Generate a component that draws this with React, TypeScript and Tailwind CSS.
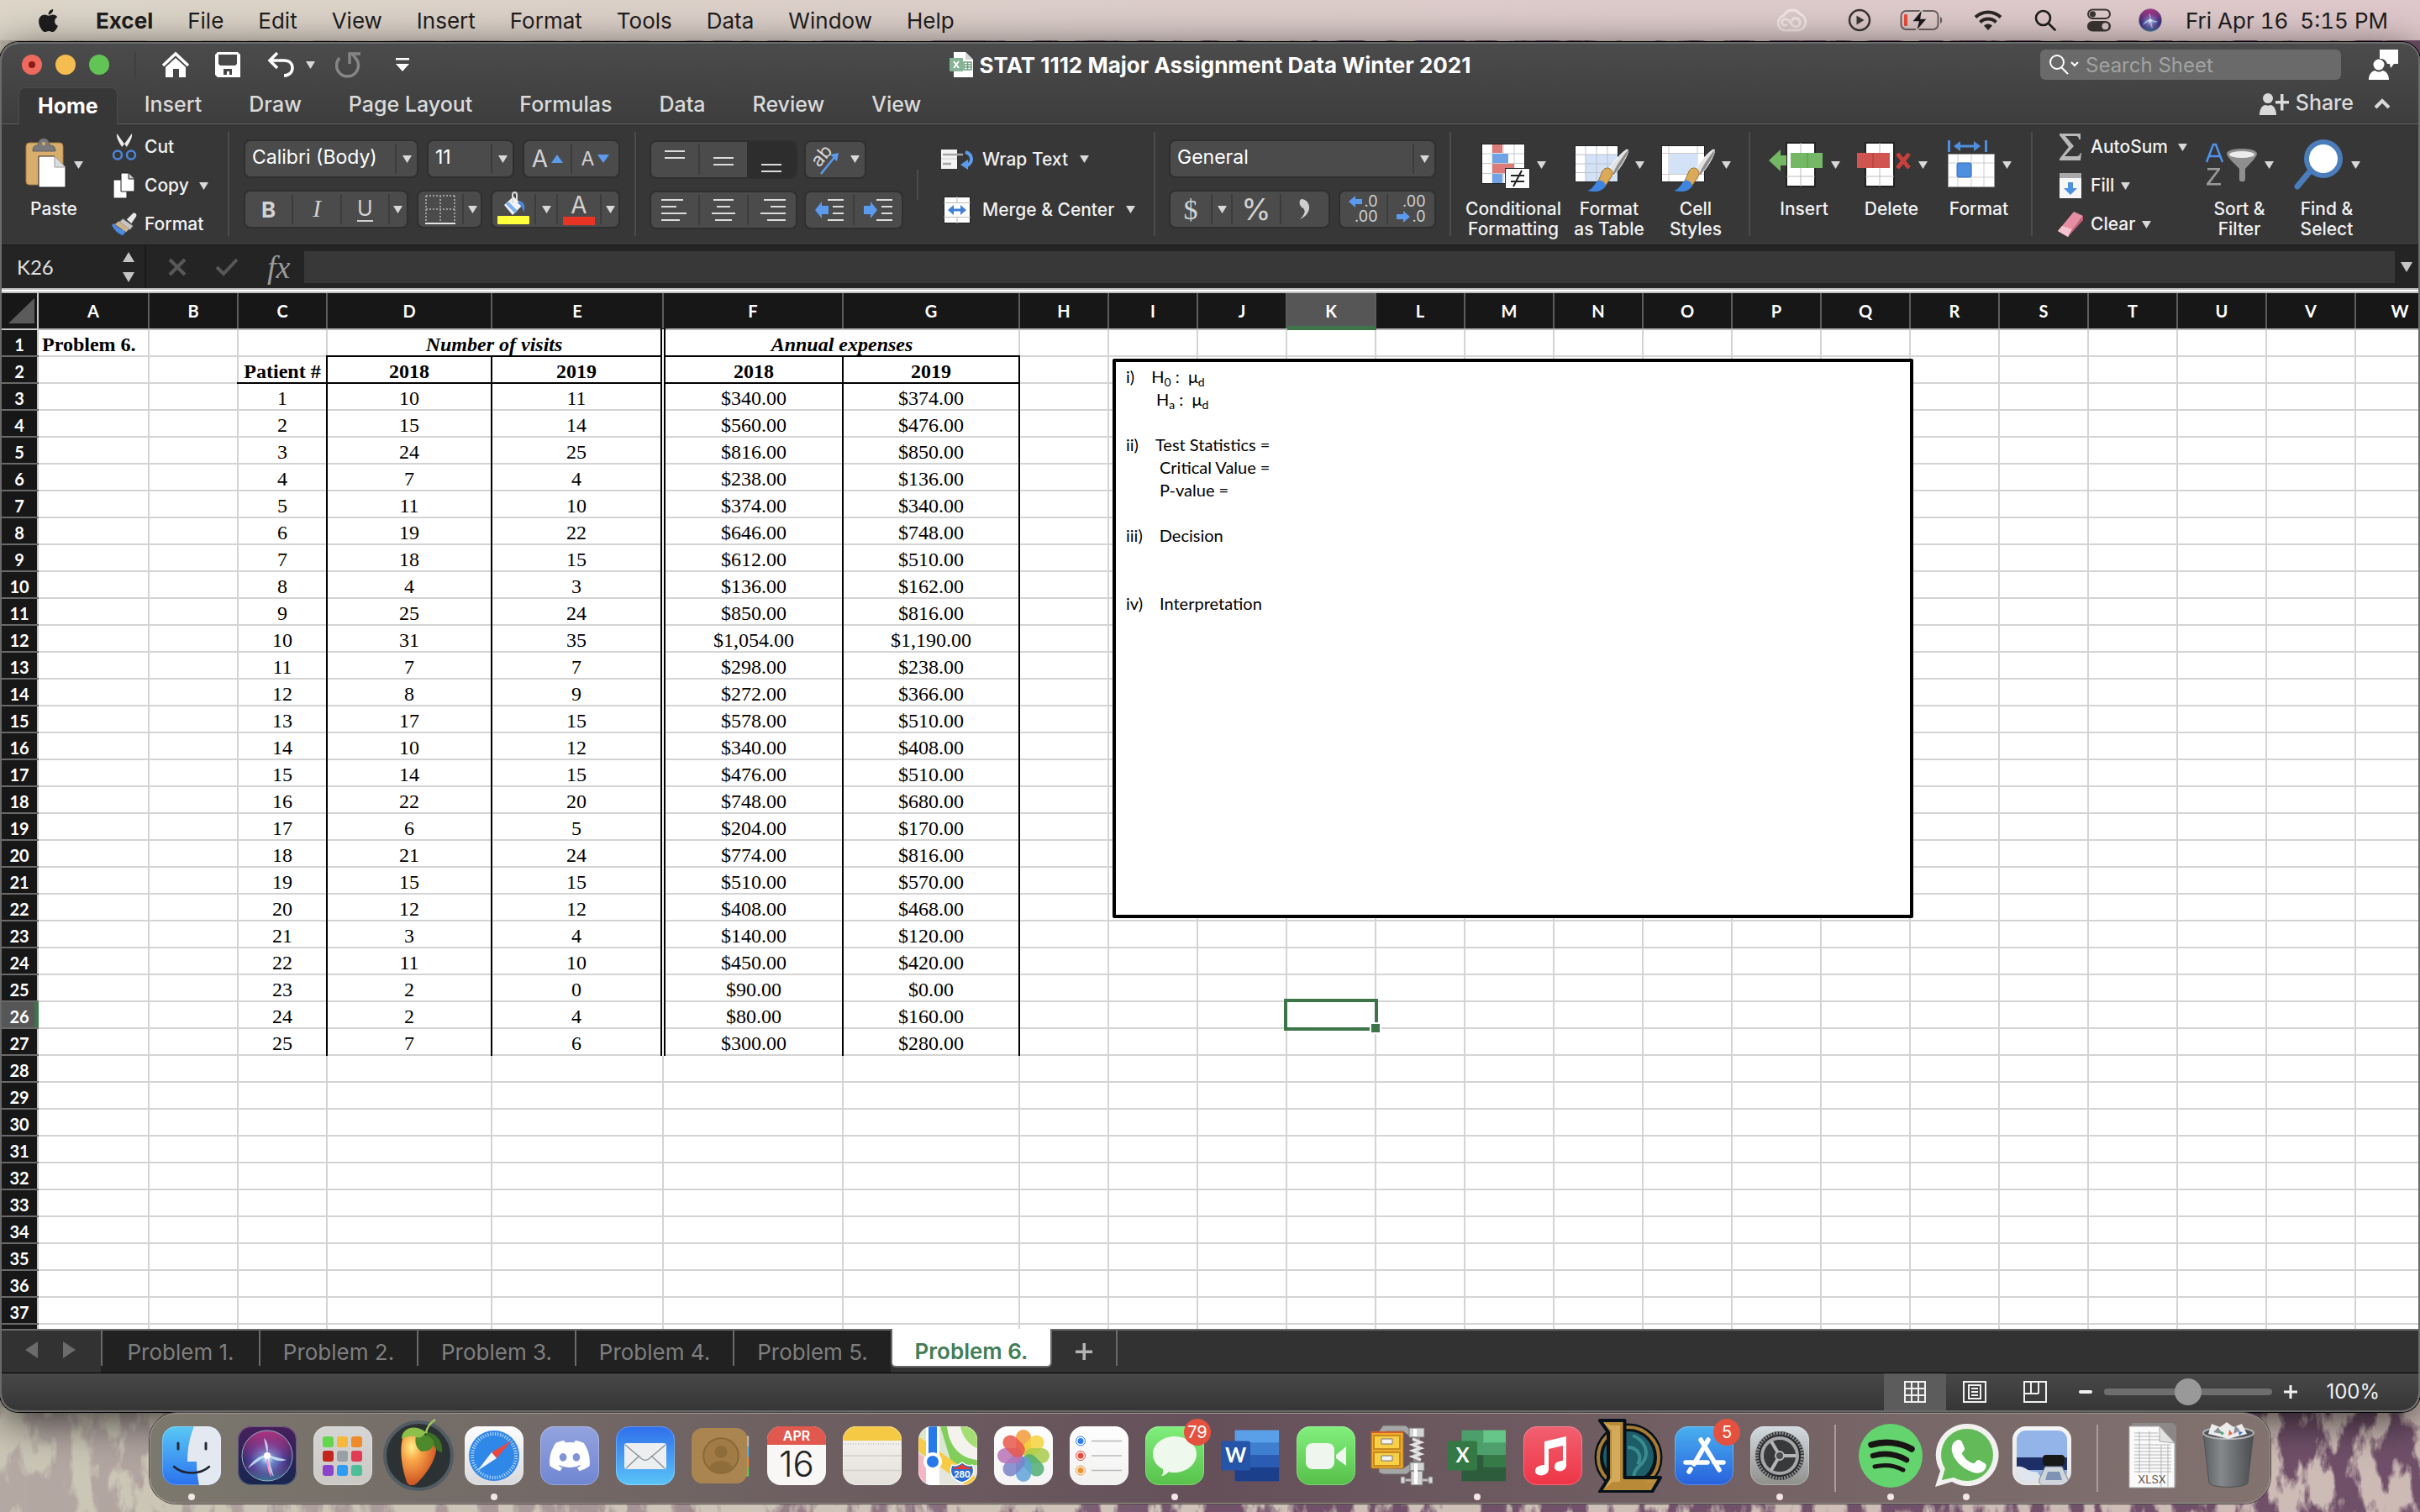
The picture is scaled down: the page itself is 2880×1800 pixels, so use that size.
import type { ReactNode } from "react";
import { FaApple, FaDiscord, FaWhatsapp } from "react-icons/fa";

const COLS = "ABCDEFGHIJKLMNOPQRSTUVW".split("");

const ROWS: [number, number, string, string][] = [
  [10, 11, "340", "374"],
  [15, 14, "560", "476"],
  [24, 25, "816", "850"],
  [7, 4, "238", "136"],
  [11, 10, "374", "340"],
  [19, 22, "646", "748"],
  [18, 15, "612", "510"],
  [4, 3, "136", "162"],
  [25, 24, "850", "816"],
  [31, 35, "1,054", "1,190"],
  [7, 7, "298", "238"],
  [8, 9, "272", "366"],
  [17, 15, "578", "510"],
  [10, 12, "340", "408"],
  [14, 15, "476", "510"],
  [22, 20, "748", "680"],
  [6, 5, "204", "170"],
  [21, 24, "774", "816"],
  [15, 15, "510", "570"],
  [12, 12, "408", "468"],
  [3, 4, "140", "120"],
  [11, 10, "450", "420"],
  [2, 0, "90", "0"],
  [2, 4, "80", "160"],
  [7, 6, "300", "280"],
];

/* ---------- menu bar ---------- */

function MenuBar() {
  return (
    <header className="relative flex h-12 shrink-0 items-center justify-between bg-linear-to-r from-[#dcd5c8] via-[#dccdca] to-[#dfc8cb] pr-[38px] pl-[42px] text-[26px] text-[#1f1d1d]">
      <nav className="flex items-center gap-[41px]">
        <button aria-label="Apple menu">
          <FaApple size={31} />
        </button>
        <button className="font-bold">Excel</button>
        {["File", "Edit", "View", "Insert", "Format", "Tools", "Data", "Window", "Help"].map((m) => (
          <button key={m}>{m}</button>
        ))}
      </nav>
      <div className="flex items-center">
        <svg width="38" height="30" viewBox="0 0 38 30" className="mr-12" fill="none" stroke="#f1e6e5" strokeWidth="3">
          <path d="M10 27h16a10 10 0 0 0 3-19.500A11 11 0 0 0 10 9.500 9 9 0 0 0 10 27Z" />
          <path d="M14 20c-3 3-8 0-6-4s7-2 9 1l3 4c4 4 10 1 9-4s-8-6-10-1" />
        </svg>
        <svg width="28" height="28" viewBox="0 0 28 28" className="mr-[34px]">
          <circle cx="14" cy="14" r="12" fill="none" stroke="#3b3534" strokeWidth="2.500" />
          <path d="M10.500 8.500v11l9-5.500Z" fill="#3b3534" />
        </svg>
        <svg width="52" height="30" viewBox="0 0 52 30" className="mr-9">
          <rect x="1.500" y="4" width="44" height="22" rx="6" fill="none" stroke="#6b6261" strokeWidth="2" />
          <rect x="5" y="8" width="4" height="14" rx="1" fill="#ee4b3b" />
          <path d="M48 11v8c3-1 3-7 0-8Z" fill="#6b6261" />
          <path d="M27 1 14 17h8l-3 12 14-16h-8Z" fill="#1b1919" stroke="#dcc9ca" strokeWidth="1.500" />
        </svg>
        <svg width="34" height="26" viewBox="0 0 34 26" className="mr-[38px]" fill="none" stroke="#2b2626" strokeWidth="4">
          <path d="M2 9.500a21.500 21.500 0 0 1 30 0" />
          <path d="M7.500 15.500a13.500 13.500 0 0 1 19 0" />
          <path d="m17 25-5-5.500a7.500 7.500 0 0 1 10 0Z" fill="#2b2626" stroke="none" />
        </svg>
        <svg width="26" height="26" viewBox="0 0 26 26" className="mr-9" fill="none" stroke="#1f1d1d" strokeWidth="2.600">
          <circle cx="10.500" cy="10.500" r="8.500" />
          <path d="m17 17 7.500 7.500" strokeLinecap="round" />
        </svg>
        <svg width="30" height="28" viewBox="0 0 30 28" className="mr-8">
          <rect x="2" y="1.500" width="26" height="10.500" rx="5.250" fill="none" stroke="#3b3534" strokeWidth="2" />
          <circle cx="7.500" cy="6.800" r="3.600" fill="#3b3534" />
          <rect x="1" y="15" width="28" height="12.500" rx="6.250" fill="#3b3534" />
          <circle cx="22.500" cy="21.200" r="4" fill="#dcc9ca" />
        </svg>
        <svg width="28" height="28" viewBox="0 0 70 70" className="mr-7">
          <SiriOrb r={34} />
        </svg>
        <span className="whitespace-pre tabular-nums">Fri Apr 16  5:15 PM</span>
      </div>
    </header>
  );
}

/* ---------- small shared parts ---------- */

function Caret({ className = "" }: { className?: string }) {
  return (
    <svg width="11" height="9" viewBox="0 0 11 9" className={`shrink-0 ${className}`}>
      <path d="M0 0h11L5.500 9Z" fill="#d9d9d9" />
    </svg>
  );
}

function Rule() {
  return <span className="mt-[9px] h-[124px] w-[2px] shrink-0 bg-[#4b4b4b]" />;
}

function Sep() {
  return <span className="h-9 w-[2px] shrink-0 bg-[#3c3c3c]" />;
}

function Box({ children, className = "" }: { children: ReactNode; className?: string }) {
  return (
    <div className={`flex h-[46px] items-center overflow-hidden rounded-lg border-2 border-[#2f2f2f] bg-[#4b4b4b] ${className}`}>
      {children}
    </div>
  );
}

function Seg({ label, children, className = "flex-1" }: { label: string; children: ReactNode; className?: string }) {
  return (
    <button aria-label={label} className={`flex h-full items-center justify-center text-[#d2d2d2] ${className}`}>
      {children}
    </button>
  );
}

function Picker({ label, value, className = "" }: { label: string; value: string; className?: string }) {
  return (
    <Box className={className}>
      <select aria-label={label} className="h-full min-w-0 flex-1 appearance-none bg-transparent pb-1 pl-2 text-[23px] text-white">
        <option>{value}</option>
      </select>
      <Sep />
      <span className="flex w-6 justify-center">
        <Caret />
      </span>
    </Box>
  );
}

function BigButton({ lines, icon, className = "" }: { lines: string[]; icon: ReactNode; className?: string }) {
  return (
    <button className={`flex shrink-0 flex-col items-center pt-4 text-[21px] leading-6 font-medium text-[#f2f2f2] ${className}`}>
      <span className="flex h-[73px] items-start gap-2">
        {icon}
        <Caret className="mt-7" />
      </span>
      {lines.map((l) => (
        <span key={l}>{l}</span>
      ))}
    </button>
  );
}

function SmallButton({ text, icon, caret, slot = "w-8 mr-2" }: { text: string; icon: ReactNode; caret?: string; slot?: string }) {
  return (
    <button className="flex h-[46px] items-center text-[21px] font-medium text-[#f2f2f2]">
      <span className={`flex justify-center ${slot}`}>{icon}</span>
      {text}
      {caret && <Caret className={caret} />}
    </button>
  );
}

function Lines({ rows, y = 0 }: { rows: [number, number][]; y?: number }) {
  return (
    <svg width="36" height="34" viewBox="0 0 36 34">
      {rows.map(([a, b], i) => (
        <rect key={i} x={a} y={y + i * 8} width={b - a} height="2" fill="#dcdcdc" />
      ))}
    </svg>
  );
}

function BlueArrow({ flip = false }: { flip?: boolean }) {
  return (
    <svg width="16" height="14" viewBox="0 0 16 14" className={flip ? "rotate-180" : ""}>
      <path d="M0 7 8 0v4h8v6H8v4Z" fill="#5b9bee" />
    </svg>
  );
}

function Brush() {
  return (
    <g>
      <path d="M62 14c-7 4-18 17-22 25l6 6c7-7 16-21 18-30Z" fill="#e3e3e3" stroke="#fff" strokeWidth="1" />
      <path d="M63 15c-5 6-14 18-18 29l2 0c6-8 15-21 17-29Z" fill="#8d8d8d" />
      <path d="M33 40c2-4 6-5 9-3s4 6 2 9l-8 12-9-4Z" fill="#dba95a" stroke="#9b7130" strokeWidth="1" />
      <path d="M27 51c5-1 9 1 10 6-4 8-14 8-22 6 6-2 8-6 12-12Z" fill="#3f85e0" />
    </g>
  );
}

/* ---------- title bar and ribbon ---------- */

function TitleBar() {
  return (
    <div className="flex h-[50px] items-center pr-6 pl-6">
      <div className="flex flex-1 items-center">
        <button aria-label="Close" className="mr-4 flex size-6 items-center justify-center rounded-full bg-[#ee6a5f]">
          <span className="size-2 rounded-full bg-[#8c1a10]" />
        </button>
        <button aria-label="Minimize" className="mr-4 size-6 rounded-full bg-[#f5bd4f]" />
        <button aria-label="Zoom" className="size-6 rounded-full bg-[#61c454]" />
        <span className="mx-[30px] h-[30px] w-[2px] bg-[#3f3f3f]" />
        <button aria-label="Home screen">
          <svg width="34" height="32" viewBox="0 0 34 32">
            <path d="M2 17 17 3l15 14" fill="none" stroke="#fff" strokeWidth="3.500" />
            <path d="M5 19 17 8l12 11v12h-8V21h-7v10H5Z" fill="#fff" />
          </svg>
        </button>
        <button aria-label="Save" className="ml-[30px]">
          <svg width="30" height="30" viewBox="0 0 30 30">
            <path fillRule="evenodd" fill="#fff" d="M3 0h24l3 3v27H3l-3-3V3Zm1 3v11l2 2h18l2-2V3Zm6 17v7h4v-4h3v4h3v-7Z" />
          </svg>
        </button>
        <button aria-label="Undo" className="ml-8">
          <svg width="34" height="32" viewBox="0 0 34 32" fill="none" stroke="#fff" strokeWidth="3.500">
            <path d="M12 2 3 11l9 9" />
            <path d="M3 11h17c7 0 10 4 10 9s-4 9-10 9" />
          </svg>
        </button>
        <Caret className="ml-3" />
        <button aria-label="Repeat" className="ml-6">
          <svg width="32" height="32" viewBox="0 0 32 32" fill="none" stroke="#858585" strokeWidth="3.500">
            <path d="M5 8a13 13 0 1 0 19 0L20 3" />
            <path d="M17 15V3h13" />
          </svg>
        </button>
        <button aria-label="Customize toolbar" className="ml-10">
          <svg width="16" height="16" viewBox="0 0 16 16" fill="#fff">
            <path d="M0 0h16v2.500H0ZM0 7h16L8 16Z" />
          </svg>
        </button>
      </div>
      <h1 className="flex items-center gap-2 text-[26px] font-bold text-white">
        <svg width="28" height="30" viewBox="0 0 28 30">
          <path d="M5 0h14l9 9v21H5Z" fill="#fff" />
          <path d="M19 0v9h9Z" fill="#d6d6d6" />
          <path d="M17 12h9v9h-9Zm0 3h9m-9 3h9m-4.500-6v9" fill="none" stroke="#6e9e7d" strokeWidth="1.500" />
          <rect x="0" y="7" width="16" height="16" rx="1" fill="#86b394" />
          <path d="m5 11 6 8m0-8-6 8" stroke="#fff" strokeWidth="2" />
        </svg>
        STAT 1112 Major Assignment Data Winter 2021
      </h1>
      <div className="flex flex-1 items-center justify-end gap-8">
        <div className="flex h-9 w-[358px] items-center rounded-md bg-[#6a6a6a] pl-[10px]">
          <svg width="38" height="24" viewBox="0 0 38 24" fill="none" stroke="#fff" strokeWidth="2">
            <circle cx="10" cy="9" r="8" />
            <path d="m15 15 8 8M27 9l4 4 4-4" />
          </svg>
          <input
            aria-label="Search sheet"
            placeholder="Search Sheet"
            className="ml-[6px] h-full min-w-0 flex-1 bg-transparent text-[24px] text-white outline-none placeholder:text-[#a2a2a2]"
          />
        </div>
        <button aria-label="Feedback">
          <svg width="36" height="36" viewBox="0 0 36 36" fill="#fff">
            <path d="M14 0h22v17h-5l-4 5-1-5h-3a8 8 0 0 0-9-6Z" />
            <circle cx="13" cy="18" r="6.500" />
            <path d="M1 36c0-7 4-11 8-11 2 2 6 2 8 0 4 0 8 4 8 11Z" />
          </svg>
        </button>
      </div>
    </div>
  );
}

function RibbonTabs() {
  return (
    <div className="flex h-[46px] items-end border-b border-[#5f5f5f] pr-[33px] pl-5 text-[25px] font-medium text-[#dadada]">
      <button className="-mb-px h-11 rounded-t-lg border border-b-0 border-[#4c4c4c] bg-[#373737] px-[22px] font-bold text-white">Home</button>
      <nav className="flex h-11 flex-1 gap-14 pl-8">
        {["Insert", "Draw", "Page Layout", "Formulas", "Data", "Review", "View"].map((t) => (
          <button key={t}>{t}</button>
        ))}
      </nav>
      <div className="flex h-11 items-center gap-2 pb-1">
        <svg width="36" height="30" viewBox="0 0 36 30" fill="#dadada">
          <circle cx="11" cy="9" r="6" />
          <path d="M1 29c0-8 4-12 7-12 2 1 4 1 6 0 3 0 7 4 7 12ZM26 4h3.500v8H36v3.500h-6.500v8H26v-8h-6V12h6Z" />
        </svg>
        <button>Share</button>
        <button aria-label="Collapse ribbon" className="ml-4">
          <svg width="20" height="14" viewBox="0 0 20 14" fill="none" stroke="#dadada" strokeWidth="4">
            <path d="m2 12 8-8 8 8" />
          </svg>
        </button>
      </div>
    </div>
  );
}

function ClipboardGroup() {
  return (
    <div className="flex w-[269px] shrink-0">
      <BigButton
        lines={["Paste"]}
        className="w-[124px]"
        icon={
          <svg width="50" height="60" viewBox="0 0 50 60">
            <rect x="1" y="6" width="44" height="50" rx="4" fill="#d9ae6c" stroke="#a87f40" strokeWidth="1" />
            <path d="M9 16c0-6 2-7 6-7 1-6 3-8 7-8s6 2 7 8c4 0 7 1 7 7Z" fill="#7a7a7a" stroke="#606060" />
            <circle cx="22" cy="7" r="2" fill="#d9ae6c" />
            <path d="M16 22h19l13 13v24H16Z" fill="#fff" stroke="#222" />
            <path d="M35 22v13h13Z" fill="#dcdcdc" stroke="#999" />
          </svg>
        }
      />
      <div className="flex flex-col pt-1 pl-[6px]">
        <SmallButton
          text="Cut"
          icon={
            <svg width="30" height="34" viewBox="0 0 30 34">
              <path d="M6 1c-1 4 3 12 9 20l3-4C13 11 10 6 6 1ZM24 1c1 4-3 12-9 20l-3-4C17 11 20 6 24 1Z" fill="#eee" />
              <circle cx="7" cy="26.500" r="5" fill="none" stroke="#4a86dc" strokeWidth="2.500" />
              <circle cx="23" cy="26.500" r="5" fill="none" stroke="#4a86dc" strokeWidth="2.500" />
            </svg>
          }
        />
        <SmallButton
          text="Copy"
          caret="ml-3"
          icon={
            <svg width="28" height="32" viewBox="0 0 28 32" fill="#fff" stroke="#222">
              <path d="M1 9h10l6 6v16H1Z" />
              <path d="M10 1h9l7 7v15H10Z" />
              <path d="M19 1v7h7" fill="#ccc" />
            </svg>
          }
        />
        <SmallButton
          text="Format"
          icon={
            <svg width="34" height="30" viewBox="0 0 34 30">
              <path d="m20 9 8-8c3-1 5 1 4 4l-6 9Z" fill="#e8e8e8" />
              <path d="m15 8 13 9-4 5L11 12Z" fill="#c6c6c6" stroke="#777" />
              <path d="m10 11 13 10-4 4L5 15Z" fill="#cdb28c" />
              <path d="M4 14c4 5 9 8 15 10l-4 5C9 27 4 22 1 16Z" fill="#4c8be0" />
            </svg>
          }
        />
      </div>
    </div>
  );
}

function FontGroup() {
  return (
    <div className="flex w-[482px] shrink-0 flex-col gap-[14px] px-[17px] pt-[18px]">
      <div className="flex gap-[10px]">
        <Picker label="Font" value="Calibri (Body)" className="w-[208px]" />
        <Picker label="Font size" value="11" className="w-[104px]" />
        <Box className="flex-1">
          <Seg label="Increase font size">
            <span className="text-[28px]">A</span>
            <svg width="14" height="10" viewBox="0 0 14 10" className="ml-1">
              <path d="M0 10h14L7 0Z" fill="#5b9bee" />
            </svg>
          </Seg>
          <Sep />
          <Seg label="Decrease font size">
            <span className="text-[23px]">A</span>
            <svg width="14" height="10" viewBox="0 0 14 10" className="ml-1">
              <path d="M0 0h14L7 10Z" fill="#5b9bee" />
            </svg>
          </Seg>
        </Box>
      </div>
      <div className="flex gap-[10px]">
        <Box className="w-[196px]">
          <Seg label="Bold">
            <span className="text-[26px] font-bold">B</span>
          </Seg>
          <Sep />
          <Seg label="Italic">
            <span className="font-['Liberation_Serif'] text-[29px] italic">I</span>
          </Seg>
          <Sep />
          <Seg label="Underline">
            <span className="border-b-2 text-[25px] leading-7">U</span>
          </Seg>
          <Sep />
          <Seg label="Underline options" className="w-5">
            <Caret />
          </Seg>
        </Box>
        <Box className="w-[78px]">
          <Seg label="Borders">
            <svg width="36" height="36" viewBox="0 0 36 36" fill="none" stroke="#9c9c9c" strokeWidth="2" strokeDasharray="2 2">
              <path d="M1 2h34M1 18h34M1 2v32M18 2v32M35 2v32" />
              <path d="M0 35h36" stroke="#e4e4e4" strokeDasharray="0" />
            </svg>
          </Seg>
          <Sep />
          <Seg label="Border options" className="w-5">
            <Caret />
          </Seg>
        </Box>
        <Box className="flex-1">
          <Seg label="Fill color">
            <svg width="38" height="42" viewBox="0 0 38 42">
              <path d="m8 16 11-10 11 10-12 12Z" fill="#f3f3f3" />
              <path d="m13 12 11 11-3 3L10 15Z" fill="#7bb0f2" />
              <path d="M18 14V4c0-4 5-4 5 0v6" fill="none" stroke="#ddd" strokeWidth="2" />
              <path d="M26 11c6 1 8 7 5 14-1-5-3-9-7-11Z" fill="#4a86dc" />
              <rect x="0" y="29" width="38" height="10" rx="1" fill="#ffff3c" />
            </svg>
          </Seg>
          <Sep />
          <Seg label="Fill color options" className="w-6">
            <Caret />
          </Seg>
          <Sep />
          <Seg label="Font color">
            <span className="flex w-[38px] flex-col items-center border-b-10 border-[#e93323] text-[28px] leading-7">A</span>
          </Seg>
          <Sep />
          <Seg label="Font color options" className="w-5">
            <Caret />
          </Seg>
        </Box>
      </div>
    </div>
  );
}

function AlignGroup() {
  return (
    <div className="flex w-[616px] shrink-0 items-center">
      <div className="flex w-[318px] flex-col gap-[14px] pl-4">
        <div className="flex gap-2">
          <Box className="w-[176px]">
            <Seg label="Top align">
              <Lines rows={[[6, 30], [6, 30]]} y={6} />
            </Seg>
            <Sep />
            <Seg label="Middle align">
              <Lines rows={[[6, 30], [6, 30]]} y={14} />
            </Seg>
            <Seg label="Bottom align" className="w-[58px] bg-[#2d2d2d]">
              <Lines rows={[[6, 30], [6, 30]]} y={22} />
            </Seg>
          </Box>
          <Box className="w-[74px]">
            <Seg label="Orientation">
              <svg width="34" height="42" viewBox="0 0 34 42" className="overflow-visible">
                <text x="10" y="31" fontSize="22" fill="#d8d8d8" transform="rotate(-50 10 31)" fontFamily="Inter, sans-serif">
                  ab
                </text>
                <path d="m12 38 17-21" stroke="#5b9bee" strokeWidth="2.500" />
                <path d="m33 13-10 2 8 8Z" fill="#5b9bee" />
              </svg>
            </Seg>
            <span className="flex w-6 justify-center">
              <Caret />
            </span>
          </Box>
        </div>
        <div className="flex gap-2">
          <Box className="w-[176px]">
            <Seg label="Align left">
              <Lines rows={[[2, 28], [2, 20], [2, 32], [2, 24]]} y={4} />
            </Seg>
            <Sep />
            <Seg label="Center">
              <Lines rows={[[6, 30], [10, 26], [4, 32], [8, 28]]} y={4} />
            </Seg>
            <Sep />
            <Seg label="Align right">
              <Lines rows={[[8, 34], [16, 34], [4, 34], [12, 34]]} y={4} />
            </Seg>
          </Box>
          <Box className="w-[118px]">
            <Seg label="Decrease indent">
              <svg width="36" height="34" viewBox="0 0 36 34">
                <path d="M1 17 9 7v5h8v10H9v5Z" fill="#5b9bee" />
                <path d="M16 4h19v2H16Zm6 8h13v2H22Zm0 8h13v2H22Zm-6 8h19v2H16Z" fill="#dcdcdc" />
              </svg>
            </Seg>
            <Sep />
            <Seg label="Increase indent">
              <svg width="36" height="34" viewBox="0 0 36 34">
                <path d="M17 17 9 7v5H1v10h8v5Z" fill="#5b9bee" />
                <path d="M16 4h19v2H16Zm6 8h13v2H22Zm0 8h13v2H22Zm-6 8h19v2H16Z" fill="#dcdcdc" />
              </svg>
            </Seg>
          </Box>
        </div>
      </div>
      <span className="ml-4 h-9 w-[2px] shrink-0 bg-[#4b4b4b]" />
      <div className="flex flex-col gap-[14px] pl-[26px]">
        <SmallButton
          text="Wrap Text"
          caret="ml-[14px]"
          slot="mr-[10px] w-10"
          icon={
            <svg width="40" height="26" viewBox="0 0 40 26">
              <rect x="1" y="1" width="19" height="23" fill="#f4f4f4" />
              <path d="M3 7h24M3 18h10" stroke="#a5a5a5" strokeWidth="2.500" />
              <path d="M1 12h19" stroke="#ccc" />
              <path d="M30 4c9 3 9 12 2 16" fill="none" stroke="#5b9bee" strokeWidth="4" />
              <path d="m24 19 9-6v12Z" fill="#5b9bee" />
            </svg>
          }
        />
        <SmallButton
          text="Merge & Center"
          caret="ml-[14px]"
          slot="mr-[10px] w-10"
          icon={
            <svg width="32" height="32" viewBox="0 0 32 32">
              <rect x="0.500" y="0.500" width="31" height="31" fill="#fff" stroke="#222" />
              <path d="M0 7.500h32M0 24.500h32M16 0v7.500M16 24.500V32" stroke="#bbb" />
              <path d="M5 16l7-6v4.500h8V10l7 6-7 6v-4.500h-8V22Z" fill="#3f7fd4" />
            </svg>
          }
        />
      </div>
    </div>
  );
}

function NumberGroup() {
  return (
    <div className="flex w-[350px] shrink-0 flex-col gap-[14px] px-4 pt-[18px]">
      <Picker label="Number format" value="General" className="w-full" />
      <div className="flex gap-[10px]">
        <Box className="w-[192px]">
          <Seg label="Currency" className="w-12">
            <span className="font-['Liberation_Serif'] text-[34px]">$</span>
          </Seg>
          <Sep />
          <Seg label="Currency options" className="w-[22px]">
            <Caret />
          </Seg>
          <Sep />
          <Seg label="Percent">
            <span className="text-[36px]">%</span>
          </Seg>
          <Sep />
          <Seg label="Comma style">
            <svg width="14" height="24" viewBox="0 0 14 24">
              <path d="M3 0c11 1 14 17-2 24 6-6 7-10 4-13-5-2-6-10-2-11Z" fill="#cfcfcf" />
            </svg>
          </Seg>
        </Box>
        <Box className="flex-1">
          <Seg label="Increase decimal">
            <span className="flex flex-col items-end text-[18px] leading-[18px]">
              <span className="flex items-center gap-[2px]">
                <BlueArrow />
                .0
              </span>
              <span>.00</span>
            </span>
          </Seg>
          <Sep />
          <Seg label="Decrease decimal">
            <span className="flex flex-col items-end text-[18px] leading-[18px]">
              <span>.00</span>
              <span className="flex items-center gap-[2px]">
                <BlueArrow flip />
                .0
              </span>
            </span>
          </Seg>
        </Box>
      </div>
    </div>
  );
}

function StylesGroup() {
  return (
    <div className="flex w-[354px] shrink-0 pl-3">
      <BigButton
        lines={["Conditional", "Formatting"]}
        className="w-[124px]"
        icon={
          <svg width="58" height="62" viewBox="0 0 58 62">
            <rect x="0.500" y="7.500" width="51" height="47" fill="#fff" stroke="#222" />
            <path d="M13 8v46M26 8v46M39 8v46M1 19h50M1 30.500h50M1 42.500h50" stroke="#c9c9c9" />
            <path d="M13 8h12v10H13ZM13 31h26v11H13Z" fill="#dc7c78" />
            <path d="M13 19h19v11H13ZM13 43h12v11H13Z" fill="#6fa3e6" />
            <rect x="28.500" y="36.500" width="29" height="24" fill="#fafafa" stroke="#222" />
            <path d="M35 45h16M35 52h16M48 39 38 58" stroke="#222" strokeWidth="2" />
          </svg>
        }
      />
      <BigButton
        lines={["Format", "as Table"]}
        className="w-[104px]"
        icon={
          <svg width="64" height="66" viewBox="0 0 64 66">
            <rect x="0.500" y="9.500" width="51" height="43" fill="#fff" stroke="#222" />
            <path d="M13 20h38v32H13Z" fill="#d3e2f7" />
            <path d="M13 10v42M26 10v42M39 10v42M1 20h50M1 31h50M1 41.500h50" stroke="#b9c2cf" />
            <Brush />
          </svg>
        }
      />
      <BigButton
        lines={["Cell", "Styles"]}
        className="w-[102px]"
        icon={
          <svg width="64" height="66" viewBox="0 0 64 66">
            <rect x="0.500" y="9.500" width="51" height="43" fill="#fff" stroke="#222" />
            <path d="M9 10v42M43 10v42M1 18.500h50M1 43.500h50" stroke="#c9c9c9" />
            <path d="M9 19h34v24H9Z" fill="#d3e2f7" />
            <Brush />
          </svg>
        }
      />
    </div>
  );
}

function CellsGroup() {
  return (
    <div className="flex w-[334px] shrink-0 pl-3">
      <BigButton
        lines={["Insert"]}
        className="w-[104px]"
        icon={
          <svg width="66" height="60" viewBox="0 0 66 60">
            <path d="M21 6h34v52H21Z" fill="#fff" stroke="#222" strokeWidth="2" />
            <path d="M38 6v52M21 46h34" stroke="#bbb" />
            <path d="M26 18h38v18H26ZM0 27l14-13v7h7v12h-7v7Z" fill="#74b765" />
            <path d="M46 18v18" stroke="#5a9a4c" />
          </svg>
        }
      />
      <BigButton
        lines={["Delete"]}
        className="w-[104px]"
        icon={
          <svg width="66" height="60" viewBox="0 0 66 60">
            <path d="M11 6h34v52H11Z" fill="#fff" stroke="#222" strokeWidth="2" />
            <path d="M28 6v52M11 46h34" stroke="#bbb" />
            <path d="M1 18h39v18H1Z" fill="#d0544f" />
            <path d="M20 18v18" stroke="#a83d39" />
            <path d="m49 19 14 17m0-17L49 36" stroke="#c8403b" strokeWidth="5" />
          </svg>
        }
      />
      <BigButton
        lines={["Format"]}
        className="w-[104px]"
        icon={
          <svg width="58" height="60" viewBox="0 0 58 60">
            <path d="M1 3h3v14H1ZM45 3h3v14h-3Zm-37 7 8-6v4.500h16V4l8 6-8 6v-4.500H16V16Z" fill="#4f8fe0" />
            <rect x="1.500" y="19.500" width="55" height="39" fill="#fff" stroke="#999" />
            <path d="M13 20v38M29 20v38M44 20v38M2 30h54M2 47h54" stroke="#ccc" />
            <rect x="12" y="30" width="17" height="17" rx="2" fill="#4f8fe0" stroke="#2f6cb8" />
          </svg>
        }
      />
    </div>
  );
}

function EditingGroup() {
  return (
    <div className="flex shrink-0 pl-[29px]">
      <div className="flex w-[165px] flex-col pt-1">
        <SmallButton
          text="AutoSum"
          caret="ml-3"
          icon={
            <svg width="28" height="34" viewBox="0 0 28 34">
              <path d="M1 1h25v7h-2c0-3-1-4-4-4H8l10 12L7 28h13c4 0 5-1 6-4h1l-1 9H1v-2l11-14L1 3Z" fill="#b9b9b9" />
            </svg>
          }
        />
        <SmallButton
          text="Fill"
          caret="ml-2"
          icon={
            <svg width="26" height="30" viewBox="0 0 26 30">
              <rect width="26" height="30" fill="#f6f6f6" />
              <rect width="26" height="6" fill="#a9a9a9" />
              <path d="M10 11h6v7h5l-8 8-8-8h5Z" fill="#4f8fe0" />
            </svg>
          }
        />
        <SmallButton
          text="Clear"
          caret="ml-2"
          icon={
            <svg width="32" height="32" viewBox="0 0 32 32">
              <path d="M1 24 20 1l11 5-18 25Z" fill="#e68fa4" />
              <path d="m1 24 5-6 12 4-5 9Z" fill="#f6c3d0" />
              <path d="m18 22 13-16v5L13 31Z" fill="#c4627c" />
            </svg>
          }
        />
      </div>
      <BigButton
        lines={["Sort &", "Filter"]}
        className="w-[104px]"
        icon={
          <svg width="62" height="62" viewBox="0 0 62 62">
            <path d="m1 29 8-21h3l8 21M4 22h13" fill="none" stroke="#4f93ee" strokeWidth="2.500" />
            <path d="M2 36h15v2L5 54h13v2.500H1v-2L13.500 38.500H2Z" fill="#9a9a9a" />
            <path d="M25 19c0-8 36-8 36 0 0 4-10 13-14 18v13c0 3-7 3-7 0V37c-4-5-15-14-15-18Z" fill="#8f8f8f" />
            <ellipse cx="43" cy="20" rx="15" ry="4" fill="#ececec" />
          </svg>
        }
      />
      <BigButton
        lines={["Find &", "Select"]}
        className="w-[104px]"
        icon={
          <svg width="60" height="64" viewBox="0 0 60 64">
            <path d="M19 40 4 58" stroke="#4b7dbd" strokeWidth="7" strokeLinecap="round" />
            <circle cx="35" cy="25" r="20" fill="#fff" stroke="#4b7dbd" strokeWidth="6" />
          </svg>
        }
      />
    </div>
  );
}

function Ribbon() {
  return (
    <div className="flex h-[143px] shrink-0 overflow-hidden bg-[#373737] text-[#f2f2f2]">
      <ClipboardGroup />
      <Rule />
      <FontGroup />
      <Rule />
      <AlignGroup />
      <Rule />
      <NumberGroup />
      <Rule />
      <StylesGroup />
      <Rule />
      <CellsGroup />
      <Rule />
      <EditingGroup />
    </div>
  );
}

function FormulaBar() {
  return (
    <div className="flex h-[52px] shrink-0 items-center border-t-2 border-[#1f1f1f] bg-[#242424]">
      <div className="flex h-full w-[172px] items-center border-r-2 border-[#1a1a1a] pr-3 pl-[18px]">
        <input aria-label="Name box" defaultValue="K26" className="min-w-0 flex-1 bg-transparent font-[Lato] text-[24px] text-[#e0e0e0] outline-none" />
        <svg width="14" height="36" viewBox="0 0 14 36" fill="#c4c4c4">
          <path d="M0 12 7 0l7 12ZM0 24h14L7 36Z" />
        </svg>
      </div>
      <div className="flex w-[188px] items-center pl-[26px]">
        <button aria-label="Cancel">
          <svg width="22" height="22" viewBox="0 0 22 22" stroke="#585858" strokeWidth="4">
            <path d="m2 2 18 18M20 2 2 20" />
          </svg>
        </button>
        <button aria-label="Enter" className="ml-[34px]">
          <svg width="28" height="22" viewBox="0 0 28 22" fill="none" stroke="#585858" strokeWidth="4">
            <path d="m2 11 8 8L26 2" />
          </svg>
        </button>
        <button aria-label="Insert function" className="ml-[34px] font-['Liberation_Serif'] text-[38px] text-[#9b9b9b] italic">
          fx
        </button>
      </div>
      <input aria-label="Formula" className="h-[38px] min-w-0 flex-1 bg-[#383838] outline-none" />
      <button aria-label="Expand formula bar" className="flex w-7 justify-center">
        <svg width="14" height="12" viewBox="0 0 14 12">
          <path d="M0 0h14L7 12Z" fill="#c4c4c4" />
        </svg>
      </button>
    </div>
  );
}

/* ---------- sheet ---------- */

const COL_WIDTHS: Record<string, string> = {
  A: "w-[132px]",
  D: "w-[196px]",
  E: "w-[204px]",
  F: "w-[214px]",
  G: "w-[210px]",
};

// "double" at 2px paints as a plain line but wins over the grey gridlines where borders collapse
function cellBorder(col: string, row: number) {
  const inData = row <= 27;
  let right = "border-r-2 border-r-[#d4d4d4]";
  if (inData && col === "E") right = "border-r-[6px] [border-right-style:double] border-r-black";
  else if (inData && row > 1 && "CDFG".includes(col)) right = "border-r-2 [border-right-style:double] border-r-black";
  let bottom = "border-b-2 border-b-[#d4d4d4]";
  if ((row === 1 && "DEFG".includes(col)) || (row === 2 && "CDEFG".includes(col))) {
    bottom = "border-b-2 [border-bottom-style:double] border-b-black";
  }
  return `${right} ${bottom}`;
}

function cellText(col: string, row: number) {
  if (row === 1 && col === "A") return "Problem 6.";
  if (row === 2) return { C: "Patient #", D: "2018", E: "2019", F: "2018", G: "2019" }[col] ?? "";
  const r = ROWS[row - 3];
  if (!r) return "";
  if (col === "C") return String(row - 2);
  if (col === "D") return String(r[0]);
  if (col === "E") return String(r[1]);
  if (col === "F") return `$${r[2]}.00`;
  if (col === "G") return `$${r[3]}.00`;
  return "";
}

function SheetRow({ row }: { row: number }) {
  const active = row === 26;
  const cell = "h-8 px-0 pt-1 pb-0 leading-[26px] whitespace-nowrap";
  return (
    <tr>
      <th
        scope="row"
        className={`h-8 border-r-2 border-b-2 border-b-[#696969] px-0 pt-1 pb-0 font-[Lato] text-[20px] leading-6 font-bold text-white ${
          active ? "border-r-[#3b7549] bg-[linear-gradient(to_left,#3b7549_3px,#565656_3px)]" : "border-r-[#c9c9c9] bg-[#171717]"
        }`}
      >
        {row < 38 && row}
      </th>
      {COLS.map((c) => {
        if (row === 1 && (c === "E" || c === "G")) return null;
        if (row === 1 && (c === "D" || c === "F")) {
          return (
            <td key={c} colSpan={2} className={`${cell} text-center font-bold italic ${cellBorder(c === "D" ? "E" : "G", 1)}`}>
              {c === "D" ? "Number of visits" : "Annual expenses"}
            </td>
          );
        }
        return (
          <td
            key={c}
            className={`${cell} ${cellBorder(c, row)} ${c === "A" ? "indent-1 text-left" : "text-center"} ${row < 3 ? "font-bold" : ""}`}
          >
            {cellText(c, row)}
          </td>
        );
      })}
    </tr>
  );
}

function Sub({ children }: { children: ReactNode }) {
  return <sub className="text-[14px]">{children}</sub>;
}

function Sheet() {
  return (
    <main className="relative min-h-0 flex-1 overflow-hidden bg-white">
      <table className="w-max table-fixed border-collapse bg-white font-['Liberation_Serif',serif] text-[24px] text-black">
        <colgroup>
          <col className="w-[43px]" />
          {COLS.map((c) => (
            <col key={c} className={COL_WIDTHS[c] ?? "w-[106px]"} />
          ))}
        </colgroup>
        <thead>
          <tr className="font-[Lato] text-[20px] leading-6 text-white">
            <th className="h-[43px] border-r-2 border-b-2 border-[#c9c9c9] bg-[#171717] p-0">
              <svg width="32" height="32" viewBox="0 0 32 32" className="ml-2 block" aria-label="Select all">
                <path d="M0 31 31 1v30Z" fill="#5b5b5b" />
              </svg>
            </th>
            {COLS.map((c) => (
              <th
                key={c}
                scope="col"
                className={`border-r-2 border-b-2 border-r-[#5c5c5c] p-0 font-bold ${
                  c === "K" ? "border-b-[#3b7549] bg-[linear-gradient(to_top,#3b7549_3px,#565656_3px)]" : "border-b-[#b9b9b9] bg-[#171717]"
                }`}
              >
                {c}
              </th>
            ))}
          </tr>
        </thead>
        <tbody>
          {Array.from({ length: 38 }, (_, i) => (
            <SheetRow key={i} row={i + 1} />
          ))}
        </tbody>
      </table>

      {/* floating text box */}
      <div className="absolute top-[78px] left-[1322px] h-[666px] w-[953px] rounded-xs border-4 border-black bg-white px-3 py-1 font-[Lato] text-[20px] leading-[27px] whitespace-pre text-black">
        <p>
          <span className="mr-5">i)</span>H<Sub>0</Sub> :  μ<Sub>d</Sub>
        </p>
        <p className="pl-9">
          H<Sub>a</Sub> :  μ<Sub>d</Sub>
        </p>
        <p className="mt-[27px]">
          <span className="mr-5">ii)</span>Test Statistics =
        </p>
        <p className="pl-10">Critical Value =</p>
        <p className="pl-10">P-value =</p>
        <p className="mt-[27px]">
          <span className="mr-5">iii)</span>Decision
        </p>
        <p className="mt-[54px]">
          <span className="mr-5">iv)</span>Interpretation
        </p>
      </div>

      {/* active cell K26 */}
      <div className="absolute top-[840px] left-[1526px] h-[38px] w-[112px] border-4 border-[#3b7549]">
        <span className="absolute -right-2 -bottom-2 size-[14px] border-2 border-white bg-[#3b7549]" />
      </div>
    </main>
  );
}

function SheetTabs() {
  return (
    <div className="flex h-[52px] shrink-0 items-start border-t-2 border-[#6a6a6a] bg-[#323232] text-[26px]">
      <div className="flex h-full w-[118px] items-center gap-[30px] pb-1 pl-7">
        <button aria-label="Previous sheet">
          <svg width="15" height="20" viewBox="0 0 15 20">
            <path d="M15 0v20L0 10Z" fill="#6b6b6b" />
          </svg>
        </button>
        <button aria-label="Next sheet">
          <svg width="15" height="20" viewBox="0 0 15 20">
            <path d="M0 0v20l15-10Z" fill="#6b6b6b" />
          </svg>
        </button>
      </div>
      <div className="flex h-full items-start bg-[#212121]">
        {[1, 2, 3, 4, 5].map((n) => (
          <button key={n} className="flex h-[42px] w-[188px] items-center justify-center border-l-2 border-[#6a6a6a] pt-2 text-[#7f7f7f]">
            Problem {n}.
          </button>
        ))}
      </div>
      <button className="-mt-[2px] flex h-[46px] w-[192px] items-center justify-center rounded-b-md border-2 border-t-0 border-[#6a6a6a] bg-white pt-2 font-semibold text-[#417d55]">
        Problem 6.
      </button>
      <button aria-label="Add sheet" className="flex h-[42px] w-[78px] items-center justify-center border-r-2 border-[#6a6a6a] pt-2">
        <svg width="20" height="20" viewBox="0 0 20 20">
          <path d="M8.500 0h3.500v8.500H20V12h-8v8H8.500v-8H0V8.500h8.500Z" fill="#b4b4b4" />
        </svg>
      </button>
    </div>
  );
}

function StatusBar() {
  return (
    <footer className="flex h-[45px] shrink-0 items-center justify-end border-t border-black bg-linear-to-b from-[#484848] to-[#363636] pr-[46px]">
      <button aria-label="Normal view" className="mr-5 flex h-full w-[74px] items-center justify-center bg-[#5c5c5c]">
        <svg width="26" height="26" viewBox="0 0 26 26" fill="none" stroke="#f0f0f0" strokeWidth="2">
          <path d="M1 1h24v24H1ZM1 9h24M1 17h24M9 1v24M17 1v24" />
        </svg>
      </button>
      <button aria-label="Page layout view" className="mr-11">
        <svg width="28" height="26" viewBox="0 0 28 26" fill="none" stroke="#f0f0f0" strokeWidth="2">
          <path d="M1 1h26v24H1ZM7 5h14v16H7ZM10 9h8M10 13h8M10 17h8" />
        </svg>
      </button>
      <button aria-label="Page break view" className="mr-[38px]">
        <svg width="28" height="26" viewBox="0 0 28 26" fill="none" stroke="#f0f0f0" strokeWidth="2">
          <path d="M1 1h26v24H1ZM9 1v14M18 1v14M1 15h17" />
        </svg>
      </button>
      <button aria-label="Zoom out" className="h-1 w-4 rounded-xs bg-[#f0f0f0]" />
      <input
        type="range"
        aria-label="Zoom"
        min={0}
        max={100}
        defaultValue={50}
        className="mx-[14px] h-8 w-[200px] appearance-none bg-transparent [&::-webkit-slider-runnable-track]:h-2 [&::-webkit-slider-runnable-track]:rounded-full [&::-webkit-slider-runnable-track]:bg-[#6e6e6e] [&::-webkit-slider-thumb]:-mt-3 [&::-webkit-slider-thumb]:size-8 [&::-webkit-slider-thumb]:appearance-none [&::-webkit-slider-thumb]:rounded-full [&::-webkit-slider-thumb]:bg-[#999999]"
      />
      <button aria-label="Zoom in">
        <svg width="16" height="16" viewBox="0 0 16 16">
          <path d="M6.500 0h3v6.500H16v3H9.500V16h-3V9.500H0v-3h6.500Z" fill="#f0f0f0" />
        </svg>
      </button>
      <span className="ml-[34px] text-[24px] text-[#f0f0f0]">100%</span>
    </footer>
  );
}

/* ---------- dock ---------- */

function SiriOrb({ r }: { r: number }) {
  return (
    <g>
      <defs>
        <radialGradient id="orb" cx="50%" cy="55%" r="55%">
          <stop offset="0" stopColor="#f6fbff" />
          <stop offset="0.250" stopColor="#6a8ed0" />
          <stop offset="0.600" stopColor="#4d3f97" />
          <stop offset="1" stopColor="#252050" />
        </radialGradient>
        <linearGradient id="orbTop" x1="0" y1="0" x2="0" y2="1">
          <stop offset="0" stopColor="#b03583" />
          <stop offset="0.600" stopColor="#b03583" stopOpacity="0" />
          <stop offset="1" stopColor="#2fb9b0" stopOpacity="0.500" />
        </linearGradient>
      </defs>
      <circle cx="35" cy="35" r={r} fill="url(#orb)" />
      <circle cx="35" cy="35" r={r} fill="url(#orbTop)" stroke="#8fb3c8" strokeWidth="1" />
      <path d="M35 34 12 50c6-10 14-15 23-16Zm0 0 23 6c-9 3-16 0-23-6Zm0 0 8 26c-6-6-9-16-8-26Zm0 0-4-20c5 4 6 12 4 20Z" fill="#d8fbff" opacity="0.750" />
      <path d="m35 34 5 27c-5-8-6-18-5-27Z" fill="#ff8fc4" />
      <circle cx="35" cy="35" r="4" fill="#fff" />
    </g>
  );
}

function Tile({ id, from, to, children }: { id: string; from: string; to: string; children?: ReactNode }) {
  return (
    <svg width="70" height="70" viewBox="0 0 70 70" className="overflow-visible">
      <defs>
        <linearGradient id={id} x1="0" y1="0" x2="0" y2="1">
          <stop offset="0" stopColor={from} />
          <stop offset="1" stopColor={to} />
        </linearGradient>
        <clipPath id={`${id}-c`}>
          <rect width="70" height="70" rx="16" />
        </clipPath>
      </defs>
      <g clipPath={`url(#${id}-c)`}>
        <rect width="70" height="70" fill={`url(#${id})`} />
        {children}
      </g>
      <rect x="0.500" y="0.500" width="69" height="69" rx="15.500" fill="none" stroke="#fff" strokeOpacity="0.250" />
    </svg>
  );
}

function DockItem({ name, running, badge, children }: { name: string; running?: boolean; badge?: string; children: ReactNode }) {
  return (
    <button aria-label={name} className="relative flex h-full w-[90px] shrink-0 flex-col items-center pt-[15px]">
      <span className="flex size-[70px] items-center justify-center">{children}</span>
      {running && <span className="mt-[10px] size-2 rounded-full bg-[#f3e6e6]" />}
      {badge && (
        <span className="absolute top-[6px] right-[2px] flex size-8 items-center justify-center rounded-full bg-[#e4523f] text-[20px] text-white">{badge}</span>
      )}
    </button>
  );
}

function OfficeIcon({ letter, left, right, plate }: { letter: string; left: string[]; right: string[]; plate: string }) {
  return (
    <svg width="76" height="70" viewBox="0 0 76 70">
      {left.map((b, i) => (
        <path key={i} d={`M18 ${2 + i * 16}h29v18H18Z`} fill={b} />
      ))}
      {right.map((b, i) => (
        <path key={i} d={`M46 ${2 + i * 16}h29v18H46Z`} fill={b} />
      ))}
      <rect x="0" y="16" width="38" height="38" rx="3" fill={plate} />
      <text x="19" y="44" fontSize="26" fontWeight="700" fill="#fff" textAnchor="middle" fontFamily="Lato, sans-serif">
        {letter}
      </text>
    </svg>
  );
}

const PADS = ["#63d64b", "#f5b83a", "#ee8a2a", "#c4251e", "#9aa0a5", "#e23c55", "#8a43c9", "#2c9df2", "#4cbf98"];
const PETALS = ["#f29a3a", "#f3d23c", "#a9cc4a", "#4fae72", "#5fa3d8", "#7a83c8", "#b873b8", "#e8584e"];

function Dock() {
  return (
    <div className="relative mt-px mb-[10px] flex h-[108px] shrink-0 self-center rounded-[32px] border border-[#9d958f] bg-linear-to-r from-[#7b786d] via-[#65505a] to-[#82736f] px-1 shadow-[0_0_0_1px_#4a4442]">
      <DockItem name="Finder" running>
        <Tile id="finder" from="#5ac8f5" to="#2b72ee">
          <path d="M38 0h32v70H44c-2-9-3-18-3-28H30C30 26 33 12 38 0Z" fill="#e4e8f0" />
          <path d="M19 20v7M52 20v7" stroke="#222c3a" strokeWidth="3" strokeLinecap="round" />
          <path d="M14 48c11 10 31 10 42 0" fill="none" stroke="#1c2430" strokeWidth="2.500" strokeLinecap="round" />
        </Tile>
      </DockItem>
      <DockItem name="Siri">
        <Tile id="siri" from="#46205c" to="#17264f">
          <SiriOrb r={30} />
        </Tile>
      </DockItem>
      <DockItem name="Launchpad">
        <Tile id="launch" from="#d5d5d3" to="#cbc9c6">
          {PADS.map((p, i) => (
            <rect key={p} x={11 + (i % 3) * 17} y={12 + Math.floor(i / 3) * 17} width="13" height="13" rx="3" fill={p} />
          ))}
        </Tile>
      </DockItem>
      <DockItem name="FL Studio">
        <svg width="84" height="88" viewBox="0 0 84 88" className="shrink-0">
          <defs>
            <radialGradient id="mango" cx="30%" cy="25%" r="80%">
              <stop offset="0" stopColor="#fff08a" />
              <stop offset="0.350" stopColor="#f8a548" />
              <stop offset="1" stopColor="#c8481c" />
            </radialGradient>
          </defs>
          <circle cx="42" cy="44" r="40" fill="#2c3133" stroke="#515c63" strokeWidth="4" />
          <path d="M23 24c4-6 16-6 24-4 10 2 17 8 16 18-2 14-12 28-22 38-4 4-11 5-13-1-5-14-9-36-5-51Z" fill="url(#mango)" />
          <path d="M50 16c10 0 22 8 20 24-6-1-9-6-11-12-4-2-8-6-9-12Z" fill="#3c6f26" />
          <path d="M40 18c4 0 14 1 20 8 1 8-4 13-14 13-8-4-9-14-6-21Z" fill="#4e8a2c" />
          <path d="M22 24c0-12 14-19 29-8-4 6-8 8-14 5-6-1-10 1-15 3Z" fill="#8cc04a" />
          <path d="M51 17c1-7 5-12 11-16" fill="none" stroke="#a3c764" strokeWidth="2.500" />
        </svg>
      </DockItem>
      <DockItem name="Safari" running>
        <Tile id="safari" from="#fdfdfd" to="#d9d9db">
          <circle cx="35" cy="35" r="30" fill="#2f87e8" />
          <circle cx="35" cy="35" r="26" fill="none" stroke="#cfe6fb" strokeWidth="4" strokeDasharray="1 2" />
          <path d="M56 17 38 38l-6-7Z" fill="#e8483f" />
          <path d="m15 53 17-22 6 7Z" fill="#f4f4f6" />
        </Tile>
      </DockItem>
      <DockItem name="Discord">
        <Tile id="discord" from="#93a3df" to="#7186d2">
          <FaDiscord x="9" y="9" size={52} color="#fff" />
        </Tile>
      </DockItem>
      <DockItem name="Mail">
        <Tile id="mail" from="#2f6fec" to="#5ac4f8">
          <rect x="10" y="20" width="50" height="31" rx="3" fill="#eceeef" />
          <path d="m11 22 20 17c3 2 5 2 8 0l20-17M12 50l16-15M58 50 42 35" fill="none" stroke="#8d949a" strokeWidth="1.500" />
        </Tile>
      </DockItem>
      <DockItem name="Contacts">
        <svg width="74" height="70" viewBox="0 0 74 70">
          <path d="M66 10h6v14h-6Z" fill="#bdbdbd" />
          <path d="M66 24h6v13h-6Z" fill="#4fb4e8" />
          <path d="M66 37h6v12h-6Z" fill="#ef8c2e" />
          <path d="M66 49h6v12h-6Z" fill="#63cb54" />
          <rect x="0" y="0" width="70" height="70" rx="14" fill="#ab8550" />
          <circle cx="37" cy="35" r="22" fill="#a17b45" stroke="#8a6838" strokeWidth="2" />
          <circle cx="37" cy="30" r="8" fill="#8f6d3b" />
          <path d="M22 51c4-13 26-13 30 0-8 8-22 8-30 0Z" fill="#8f6d3b" />
        </svg>
      </DockItem>
      <DockItem name="Calendar">
        <span className="flex size-[70px] flex-col overflow-hidden rounded-2xl bg-[#f8f7f6]">
          <span className="h-[22px] bg-[#e0584e] text-[16px] leading-[23px] font-semibold text-white">APR</span>
          <span className="text-[42px] leading-[46px] font-light text-[#222]">16</span>
        </span>
      </DockItem>
      <DockItem name="Notes">
        <Tile id="notes" from="#f6f4f1" to="#e4e1dc">
          <rect width="70" height="17" fill="#f6c944" />
          <path d="M0 21h70" stroke="#c4c0b8" strokeWidth="1.500" strokeDasharray="1 2" />
          <path d="M0 35h70M0 52.500h70" stroke="#d3d0cc" strokeWidth="1.500" />
        </Tile>
      </DockItem>
      <DockItem name="Maps">
        <Tile id="maps" from="#d7e6cb" to="#e7e6e1">
          <path d="M26 0h44v46H40Z" fill="#7fcf5a" />
          <path d="M34 0h36v40C48 38 36 22 34 0Z" fill="#f4f2ec" />
          <path d="M50 0h20v26C60 22 52 12 50 0Z" fill="#a4dd74" />
          <path d="m0 12 70 50v8H56L0 30Z" fill="#f7ca48" />
          <path d="M0 32l14 10v28H0Z" fill="#f3b7c4" />
          <path d="M9 0h16v70H9Z" fill="#fff" />
          <path d="M12 0h10v40H12Z" fill="#2679e8" />
          <circle cx="17" cy="42" r="11" fill="#fff" />
          <circle cx="17" cy="42" r="7" fill="#2679e8" />
          <path d="M40 46c4 2 8 0 12-3 4 3 8 5 12 3 4 8 1 17-12 21-13-4-16-13-12-21Z" fill="#2a6fd0" stroke="#fff" strokeWidth="1.500" />
          <path d="M41 49c4 1 7-1 11-4 4 3 7 5 11 4v2H41Z" fill="#e33b32" />
          <text x="52" y="61" fontSize="10" fontWeight="700" fill="#fff" textAnchor="middle">
            280
          </text>
        </Tile>
      </DockItem>
      <DockItem name="Photos">
        <Tile id="photos" from="#fdfdfd" to="#f3f3f5">
          {PETALS.map((p, i) => (
            <rect key={p} x="26" y="4" width="18" height="30" rx="9" fill={p} opacity="0.850" transform={`rotate(${i * 45} 35 35)`} />
          ))}
        </Tile>
      </DockItem>
      <DockItem name="Reminders">
        <Tile id="reminders" from="#fefefe" to="#f1f1f0">
          {["#2f7df3", "#e34c3c", "#ee9332"].map((p, i) => (
            <g key={p}>
              <circle cx="13" cy={17.500 + i * 17.500} r="5.500" fill="none" stroke={p} />
              <circle cx="13" cy={17.500 + i * 17.500} r="3.500" fill={p} />
              <path d={`M26 ${17.500 + i * 17.500}h36`} stroke="#b9b9bb" strokeWidth="1.500" />
            </g>
          ))}
        </Tile>
      </DockItem>
      <DockItem name="Messages" running badge="79">
        <Tile id="messages" from="#80ef7c" to="#57c14a">
          <path d="M35 12c14 0 26 9 26 21S49 55 35 55c-3 0-5 0-7-1-3 3-6 5-9 5 2-2 3-5 2-8C13 47 9 40 9 33c0-12 12-21 26-21Z" fill="#eef8ec" />
        </Tile>
      </DockItem>
      <DockItem name="Word">
        <OfficeIcon
          letter="W"
          left={["#5aa0e8", "#3f7fd0", "#2a5cb4", "#1c3f8c"]}
          right={["#5aa0e8", "#3f7fd0", "#2a5cb4", "#1c3f8c"]}
          plate="#2455a8"
        />
      </DockItem>
      <DockItem name="FaceTime">
        <Tile id="facetime" from="#82f07e" to="#56bf49">
          <rect x="11" y="20" width="34" height="31" rx="8" fill="#eef6ed" />
          <path d="m47 34 12-10v23l-12-9Z" fill="#eef6ed" />
        </Tile>
      </DockItem>
      <DockItem name="WinZip">
        <svg width="78" height="76" viewBox="0 0 78 76" className="shrink-0">
          <path d="M12 9 17 2h27l7 7v8l-10-8H20v4h-8ZM12 52v6l5 2h28l6-5v-9l-10 7Z" fill="#a6a6a6" stroke="#6a6a6a" />
          <path d="M3 10h38v43H3Z" fill="#f0a92c" stroke="#a5721a" />
          <path d="M3 9h38v2H3Z" fill="#d0612c" />
          <path d="M6 14h31v16H6ZM6 34h31v16H6Z" fill="#f8d048" stroke="#c58c1f" strokeWidth="2" />
          <path d="M15 18h13v6H15ZM15 38h13v6H15Z" fill="#f2f2f2" stroke="#777" />
          <path d="M57 16v30" stroke="#8a8a8a" strokeWidth="8" />
          <path d="m52 18 10 4-10 3 10 4-10 3 10 4-10 3 10 4" fill="none" stroke="#e4e4e4" strokeWidth="3" />
          <path d="M48 5h18v11H48ZM49 46h17v10H49ZM50 56h14v17H50Z" fill="#d3d3d3" stroke="#777" />
          <path d="M53 6h4v9h-4ZM54 47h4v25h-4Z" fill="#fff" />
          <path d="M42 67h8M64 67h8" stroke="#bdbdbd" strokeWidth="3" />
          <path d="M38 63h5v8h-5ZM71 63h5v8h-5Z" fill="#d8d8d8" stroke="#777" />
        </svg>
      </DockItem>
      <DockItem name="Excel" running>
        <OfficeIcon
          letter="X"
          left={["#4b9f6a", "#4b9f6a", "#2c5c3b", "#2c5c3b"]}
          right={["#66c68a", "#4f9f6c", "#367a48", "#2c5c3b"]}
          plate="#347845"
        />
      </DockItem>
      <DockItem name="Music">
        <Tile id="music" from="#f2606f" to="#ee3546">
          <path d="M25 18 51 12v34c0 9-14 10-14 2 0-5 5-7 10-7V23l-17 4v24c0 9-16 10-16 2 0-5 6-7 11-7Z" fill="#fff" />
        </Tile>
      </DockItem>
      <DockItem name="League of Legends">
        <svg width="82" height="88" viewBox="0 0 82 88" className="shrink-0">
          <circle cx="41" cy="46" r="37" fill="#08131b" stroke="#06111a" strokeWidth="7" />
          <circle cx="41" cy="46" r="36" fill="none" stroke="#a87c32" strokeWidth="4" />
          <circle cx="41" cy="45" r="30" fill="#1c5d68" />
          <path d="M46 20c16 6 20 22 12 32-8 8-12 12-10 20M40 34c12 0 18 10 12 20" fill="none" stroke="#56b9b5" strokeWidth="4" opacity="0.500" />
          <path d="M7 2h29.500v68H79L69 87H7l10-16V16Z" fill="#b98a38" stroke="#06111a" strokeWidth="4" strokeLinejoin="round" />
          <path d="m12 5 8 3h11v67h-9l-9 8 8-13V14ZM31 75h34l8-2-12 2Z" fill="#e2c070" opacity="0.600" />
        </svg>
      </DockItem>
      <DockItem name="App Store" badge="5">
        <Tile id="appstore" from="#4ab0f0" to="#2761dc">
          <path d="M40 16 23 45M31 16l22 36M13 43h26M47 43h11M19 51l-2 3" stroke="#fff" strokeWidth="5.500" strokeLinecap="round" />
        </Tile>
      </DockItem>
      <DockItem name="System Preferences" running>
        <Tile id="prefs" from="#d3dbe0" to="#8f8f8c">
          <circle cx="35" cy="35" r="29" fill="#2a2b2d" />
          <circle cx="35" cy="35" r="27" fill="none" stroke="#8b8d90" strokeWidth="4" strokeDasharray="2 1.500" />
          <circle cx="35" cy="35" r="21" fill="#37393b" stroke="#a5a7a9" strokeWidth="4" />
          <path d="M35 35h19M35 35 25 18M35 35 25 52" stroke="#b4b6b8" strokeWidth="4" />
          <circle cx="35" cy="35" r="5" fill="#4a4c4e" stroke="#b4b6b8" strokeWidth="2" />
        </Tile>
      </DockItem>
      <span className="mx-5 mt-[13px] h-20 w-[2px] bg-[#a89c9a]" />
      <DockItem name="Spotify" running>
        <svg width="76" height="76" viewBox="0 0 76 76" className="shrink-0">
          <circle cx="38" cy="38" r="38" fill="#64d46e" />
          <g fill="none" stroke="#191414" strokeLinecap="round">
            <path d="M15 25c16-5 34-3 48 5" strokeWidth="7.500" />
            <path d="M17 38c14-4 28-2 40 5" strokeWidth="6.500" />
            <path d="M19 51c12-3 23-2 34 4" strokeWidth="5" />
          </g>
        </svg>
      </DockItem>
      <DockItem name="WhatsApp" running>
        <svg width="78" height="78" viewBox="0 0 78 78" className="shrink-0">
          <path d="M40 1a37 37 0 1 1-18 69L2 76l6-19A37 37 0 0 1 40 1Z" fill="#f1f1ef" />
          <circle cx="40" cy="38" r="31" fill="#62bb58" />
          <path d="m10 68 5-17 13 13Z" fill="#62bb58" />
          <FaWhatsapp x="6" y="4" size={68} color="#62bb58" />
          <path d="M27 21c3-2 6-1 7 2l3 7c1 3-4 5-3 7 3 5 7 9 13 11 3 1 4-5 7-4l7 4c2 1 2 3 1 6-3 6-10 7-17 4-12-5-20-13-23-24-1-6 1-11 5-13Z" fill="#fff" />
        </svg>
      </DockItem>
      <DockItem name="Preview">
        <Tile id="preview" from="#f6f6f6" to="#e2e2e2">
          <rect x="5" y="5" width="60" height="60" rx="11" fill="#93b4e8" />
          <path d="M5 37h60v15H5Z" fill="#1d2f66" />
          <path d="M5 48c10-2 14 8 24 6l8 11H16c-7 0-11-5-11-11Z" fill="#dfe6ee" />
          <rect x="36" y="34" width="26" height="13" rx="4" fill="#181818" />
          <path d="M39 48h20l7 15c1 4-1 7-5 7H37c-4 0-6-3-5-7Z" fill="#cfd5da" stroke="#7c8287" />
          <path d="M42 54h14l3 10H39Z" fill="#7f94b4" />
        </Tile>
      </DockItem>
      <span className="mx-5 mt-[13px] h-20 w-[2px] bg-[#a89c9a]" />
      <DockItem name="Downloads">
        <svg width="60" height="78" viewBox="0 0 60 78" className="shrink-0">
          <path d="M5 0h49l4 4v70H5Z" fill="#8c8887" />
          <path d="M2 4h36l18 20v53H2Z" fill="#fafafa" stroke="#aaa" />
          <path d="M8 12h28M8 16h30M8 20h30M8 26h44M8 30h44M8 34h44M8 38h44M8 42h44M8 46h44M8 50h44M8 54h44M8 58h44M14 10v50M26 10v50M40 26v50M48 26v50" stroke="#b5b5b5" />
          <path d="M38 4v18l18 2Z" fill="#e2e2e2" stroke="#aaa" />
          <text x="29" y="72" fontSize="13" fill="#555" textAnchor="middle" fontFamily="Inter, sans-serif">
            XLSX
          </text>
        </svg>
      </DockItem>
      <DockItem name="Trash">
        <svg width="64" height="80" viewBox="0 0 64 80" className="shrink-0">
          <defs>
            <linearGradient id="bin" x1="0" x2="1" y1="0" y2="0">
              <stop offset="0" stopColor="#5b5e60" />
              <stop offset="0.350" stopColor="#85898b" />
              <stop offset="1" stopColor="#4b4e50" />
            </linearGradient>
          </defs>
          <path d="M2 12h60l-7 60c-1 7-45 7-46 0Z" fill="url(#bin)" stroke="#4d5052" />
          <ellipse cx="32" cy="13" rx="30" ry="7" fill="#505355" stroke="#b0b3b5" strokeWidth="2" />
          <path d="m8 14 4-12 10 4 8-6 8 6 10-4 6 12-22 6Z" fill="#ececec" />
          <path d="m14 12 6-6 4 8ZM40 4l6 6-8 4Z" fill="#8a9097" />
          <path d="m22 10 5 3-3 3Z" fill="#3fae6a" />
          <path d="m33 9 4 5-5 2Z" fill="#e06a3a" />
          <path d="m44 11 5 1-4 4Z" fill="#3a6fc8" />
        </svg>
      </DockItem>
    </div>
  );
}

function Wallpaper() {
  return (
    <svg className="absolute inset-0 size-full" aria-hidden="true">
      <defs>
        <linearGradient id="wall" x1="0" x2="1" y1="0" y2="0">
          <stop offset="0" stopColor="#cbc6b6" />
          <stop offset="0.400" stopColor="#cfc3b8" />
          <stop offset="1" stopColor="#cdbab5" />
        </linearGradient>
        <linearGradient id="stainMask" x1="0" x2="1" y1="0" y2="0">
          <stop offset="0" stopColor="#fff" stopOpacity="0.250" />
          <stop offset="0.250" stopColor="#fff" stopOpacity="0.400" />
          <stop offset="0.500" stopColor="#fff" />
          <stop offset="1" stopColor="#fff" />
        </linearGradient>
        <filter id="stain" x="0" y="0" width="100%" height="100%" colorInterpolationFilters="sRGB">
          <feTurbulence type="fractalNoise" baseFrequency="0.035 0.016" numOctaves="5" seed="8" />
          <feColorMatrix values="0 0 0 0 0.400  0 0 0 0 0.270  0 0 0 0 0.380  7 0 0 0 -3" />
        </filter>
        <mask id="fade">
          <rect width="100%" height="100%" fill="url(#stainMask)" />
        </mask>
      </defs>
      <rect width="100%" height="100%" fill="url(#wall)" />
      <g mask="url(#fade)">
        <rect width="100%" height="100%" filter="url(#stain)" opacity="0.900" />
      </g>
    </svg>
  );
}

export default function App() {
  return (
    <div className="relative flex h-screen flex-col overflow-hidden bg-[#cbc4b6] font-[Inter,sans-serif]">
      <Wallpaper />
      <MenuBar />
      <div className="relative mt-[2px] flex min-h-0 flex-1 flex-col overflow-hidden rounded-[22px] border-2 border-[#6a6a6a] shadow-[0_10px_50px_rgba(0,0,0,0.7)] ring-1 ring-black">
        <div className="shrink-0 bg-linear-to-b from-[#4b4b4b] to-[#3d3d3d]">
          <TitleBar />
          <RibbonTabs />
        </div>
        <Ribbon />
        <FormulaBar />
        <div className="h-[6px] shrink-0 border-y-2 border-[#bdbdbd] bg-white" />
        <Sheet />
        <SheetTabs />
        <StatusBar />
      </div>
      <Dock />
    </div>
  );
}
